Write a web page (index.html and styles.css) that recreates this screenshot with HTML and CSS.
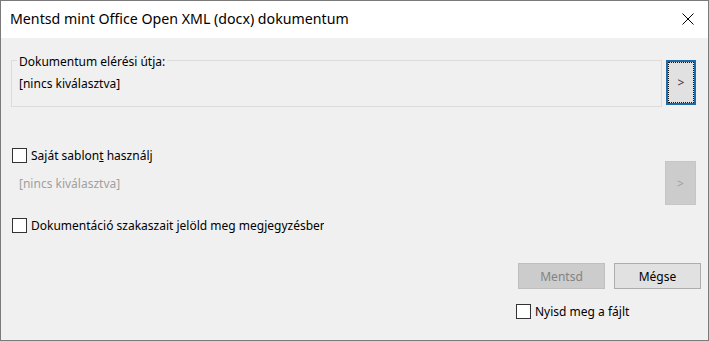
FILE: index.html
```html
<!DOCTYPE html>
<html lang="hu">
<head>
<meta charset="utf-8">
<title>Mentsd mint Office Open XML (docx) dokumentum</title>
<link rel="stylesheet" href="styles.css">
</head>
<body>
<div class="window">
  <div class="titlebar">
    <span class="title">Mentsd mint Office Open XML (docx) dokumentum</span>
    <svg class="close" width="12" height="12" viewBox="0 0 12 12" aria-label="Bezárás">
      <path d="M0.5 0.5 L11.5 11.5 M11.5 0.5 L0.5 11.5" stroke="#000" stroke-width="1" fill="none"/>
    </svg>
  </div>
  <div class="content">
    <div class="path-row">
      <div class="group">
        <span class="group-label">Dokumentum elérési útja:</span>
        <div class="value">[nincs kiválasztva]</div>
      </div>
      <button class="browse focused">&gt;</button>
    </div>

    <div class="template-row">
      <div class="template-left">
        <label class="check"><span class="box"></span><span class="check-text">Saját sablon<u>t</u> használj</span></label>
        <div class="value muted">[nincs kiválasztva]</div>
      </div>
      <button class="browse disabled">&gt;</button>
    </div>

    <label class="check clipped"><span class="box"></span><span class="check-text">Dokumentáció szakaszait jelöld meg megjegyzésben</span></label>

    <div class="actions">
      <button class="btn disabled">Mentsd</button>
      <button class="btn">Mégse</button>
    </div>

    <label class="check open-file"><span class="box"></span><span class="check-text">Nyisd meg a fájlt</span></label>
  </div>
</div>
</body>
</html>
```

FILE: styles.css
```css
* { box-sizing: border-box; }

html, body {
  margin: 0;
  padding: 0;
  background: #f0f0f0;
}

body {
  font-family: "Noto Sans", "DejaVu Sans", sans-serif;
  font-size: 12px;
  color: #000;
  overflow: hidden;
}

.window {
  width: 709px;
  height: 341px;
  border: 1px solid #7a7a7a;
  background: #f0f0f0;
  display: flex;
  flex-direction: column;
  overflow: hidden;
}

.titlebar {
  height: 37px;
  flex: none;
  background: #fff;
  display: flex;
  align-items: center;
  padding: 0 14px 1px 9px;
}

.title {
  flex: 1;
  font-size: 14.2px;
  line-height: 20px;
  color: #000;
  white-space: nowrap;
}

.close {
  flex: none;
  display: block;
}

.content {
  padding: 22px 12px 0 10px;
  display: flex;
  flex-direction: column;
}

.path-row {
  display: flex;
  align-items: flex-start;
  gap: 4px;
}

.group {
  position: relative;
  flex: 1;
  height: 47px;
  border: 1px solid #dcdcdc;
  padding: 15px 0 0 7px;
}

.group-label {
  position: absolute;
  top: -7px;
  left: 5px;
  padding: 0 2px;
  line-height: 15px;
  background: #f0f0f0;
  white-space: nowrap;
}

.value {
  line-height: 15px;
  white-space: nowrap;
}

.value.muted {
  color: #a0a0a0;
  padding-left: 8px;
  margin-top: 12px;
}

.browse {
  flex: none;
  width: 30px;
  height: 45px;
  margin: 0;
  padding: 0;
  font-family: inherit;
  font-size: 12px;
  background: #e1e1e1;
  border: 1px solid #adadad;
  color: #333;
}

.browse.focused {
  border: 2px solid #1c6aa8;
  outline: 1px dotted #111;
  outline-offset: -3px;
}

.browse.disabled {
  width: 31px;
  height: 44px;
  margin-top: 14px;
  background: #cccccc;
  border-color: #c6c6c6;
  color: #a0a0a0;
}

.template-row {
  display: flex;
  align-items: flex-start;
  justify-content: space-between;
  margin-top: 40px;
}

.template-left {
  display: flex;
  flex-direction: column;
}

.check {
  display: flex;
  align-items: center;
  height: 17px;
  padding-left: 1px;
  white-space: nowrap;
  gap: 4px;
}

.box {
  flex: none;
  width: 15px;
  height: 15px;
  border: 1px solid #333;
  background: #fff;
}

.check-text {
  line-height: 15px;
}

.clipped {
  width: 313px;
  overflow: hidden;
  margin-top: 12px;
}

.actions {
  display: flex;
  justify-content: flex-end;
  gap: 9px;
  margin-top: 29px;
  margin-right: -5px;
}

.btn {
  width: 87px;
  height: 26px;
  margin: 0;
  padding: 0;
  font-family: inherit;
  font-size: 12px;
  background: #e1e1e1;
  border: 1px solid #adadad;
  color: #000;
}

.btn.disabled {
  background: #cccccc;
  border-color: #bfbfbf;
  color: #838383;
}

.open-file {
  margin-top: 14px;
  margin-left: 504px;
}
```
